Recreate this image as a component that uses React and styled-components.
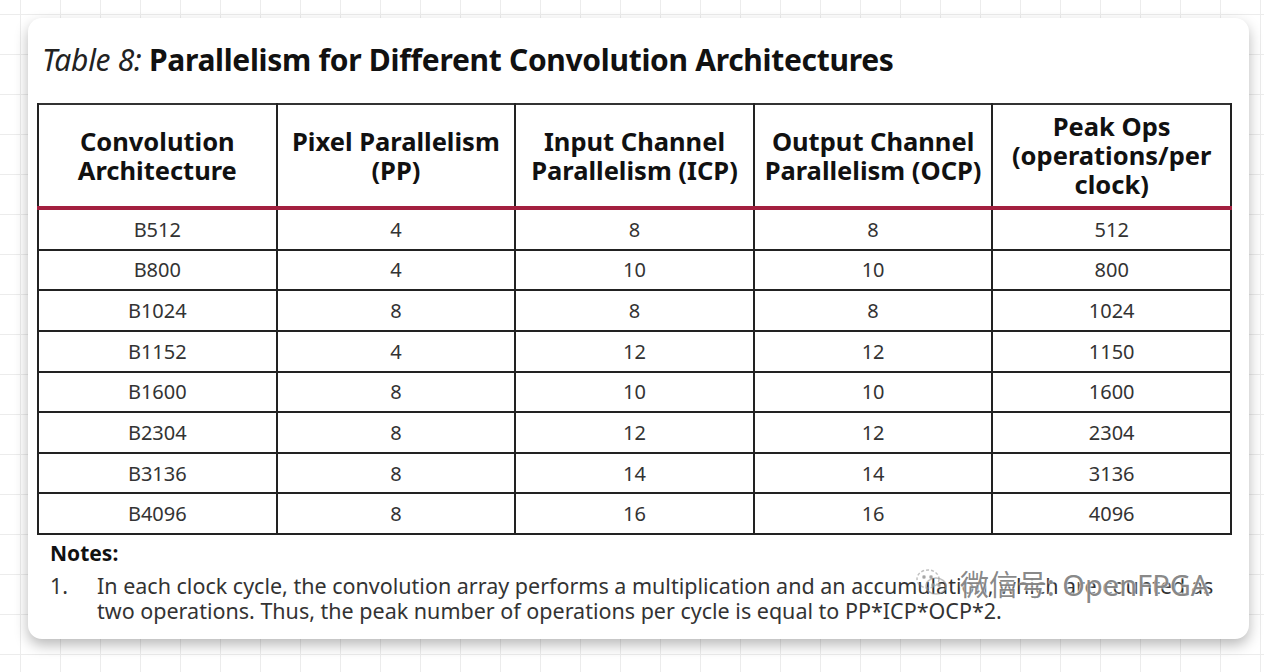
import styled, {createGlobalStyle} from 'styled-components';

const GlobalStyle = createGlobalStyle`
    body {
        margin: 0;
        background-color: #ffffff;
        background-image:
            linear-gradient(to right, #ececec 1px, transparent 1px),
            linear-gradient(to bottom, #ececec 1px, transparent 1px);
        background-size: 40px 40px;
        background-position: 20px 14px;
        font-family: "Noto Sans", "Open Sans", sans-serif;
        min-height: 672px;
    }
`

const Page = styled.div`
    padding: 18px 0 0 28px;
`

const Card = styled.div`
    position: relative;
    box-sizing: border-box;
    width: 1221px;
    height: 621px;
    background: #fff;
    border-radius: 14px;
    box-shadow: 0 6px 14px rgba(0, 0, 0, 0.28);
    padding: 21px 0 0 9px;
`

const Title = styled.h2`
    margin: 0 0 22px 5px;
    font-size: 30px;
    line-height: 42px;
    font-weight: 700;
    color: #111;
    letter-spacing: -0.3px;
`

const TitleTag = styled.span`
    font-style: italic;
    font-weight: 400;
    color: #222;
`

const Table = styled.table`
    border-collapse: collapse;
    table-layout: fixed;
    width: 1195px;
    border: 2px solid #333;
`

const Col = styled.col`
    width: 20%;
`

const HeadCell = styled.th`
    height: 101px;
    padding: 0;
    border-left: 2px solid #222;
    border-right: 2px solid #222;
    border-bottom: 4px solid #a3203f;
    font-size: 25.5px;
    line-height: 29px;
    font-weight: 700;
    color: #111;
    text-align: center;
    vertical-align: middle;
    white-space: nowrap;
`

const Cell = styled.td`
    height: 38.65px;
    padding: 0;
    border: 2px solid #222;
    font-size: 20px;
    color: #333;
    text-align: center;
    vertical-align: middle;
`

const Notes = styled.div`
    margin: 4px 0 0 13px;
    color: #333;
    font-size: 21.5px;
`

const NotesTitle = styled.div`
    font-weight: 700;
    font-size: 21px;
    color: #111;
    line-height: 28px;
    margin-bottom: 6px;
`

const NoteItem = styled.div`
    display: grid;
    grid-template-columns: 47px 1fr;
    width: 1180px;
    line-height: 25px;
`

const Watermark = styled.div`
    position: absolute;
    left: 886px;
    top: 544px;
    display: flex;
    align-items: center;
    gap: 10px;
    font-size: 29px;
    color: rgba(105, 105, 105, 0.8);
    font-family: "Noto Sans", "Noto Sans CJK SC", sans-serif;
    text-shadow: 0 0 2px #fff, 0 0 3px #fff;
    white-space: nowrap;
`

const rows = [
    ['B512', '4', '8', '8', '512'],
    ['B800', '4', '10', '10', '800'],
    ['B1024', '8', '8', '8', '1024'],
    ['B1152', '4', '12', '12', '1150'],
    ['B1600', '8', '10', '10', '1600'],
    ['B2304', '8', '12', '12', '2304'],
    ['B3136', '8', '14', '14', '3136'],
    ['B4096', '8', '16', '16', '4096'],
]

const heads = [
    ['Convolution', 'Architecture'],
    ['Pixel Parallelism', '(PP)'],
    ['Input Channel', 'Parallelism (ICP)'],
    ['Output Channel', 'Parallelism (OCP)'],
    ['Peak Ops', '(operations/per', 'clock)'],
]

function WeChatIcon(){
    return(
        <svg width="36" height="36" viewBox="0 0 36 36" fill="none" stroke="rgba(150,150,150,0.6)" strokeWidth="1.5">
            <ellipse cx="14" cy="14" rx="11" ry="9" strokeDasharray="3 2"/>
            <ellipse cx="22" cy="21" rx="10" ry="8"/>
            <circle cx="10" cy="12" r="1.2" fill="rgba(150,150,150,0.7)"/>
            <circle cx="17" cy="12" r="1.2" fill="rgba(150,150,150,0.7)"/>
            <circle cx="19" cy="20" r="1.2" fill="rgba(150,150,150,0.7)"/>
            <circle cx="25" cy="20" r="1.2" fill="rgba(150,150,150,0.7)"/>
        </svg>
    )
}

function App(){
    return(
        <Page>
            <GlobalStyle/>
            <Card>
                <Title><TitleTag>Table 8:</TitleTag> Parallelism for Different Convolution Architectures</Title>
                <Table>
                    <colgroup>
                        {heads.map((h, i) => <Col key={i}/>)}
                    </colgroup>
                    <thead>
                        <tr>
                            {heads.map((lines, i) => (
                                <HeadCell key={i}>
                                    {lines.map((l, j) => <div key={j}>{l}</div>)}
                                </HeadCell>
                            ))}
                        </tr>
                    </thead>
                    <tbody>
                        {rows.map((r) => (
                            <tr key={r[0]}>
                                {r.map((v, j) => <Cell key={j}>{v}</Cell>)}
                            </tr>
                        ))}
                    </tbody>
                </Table>
                <Notes>
                    <NotesTitle>Notes:</NotesTitle>
                    <NoteItem>
                        <span>1.</span>
                        <span>In each clock cycle, the convolution array performs a multiplication and an accumulation, which are counted as two operations. Thus, the peak number of operations per cycle is equal to PP*ICP*OCP*2.</span>
                    </NoteItem>
                </Notes>
                <Watermark>
                    <WeChatIcon/>
                    <span>微信号: OpenFPGA</span>
                </Watermark>
            </Card>
        </Page>
    )
}
export default App
